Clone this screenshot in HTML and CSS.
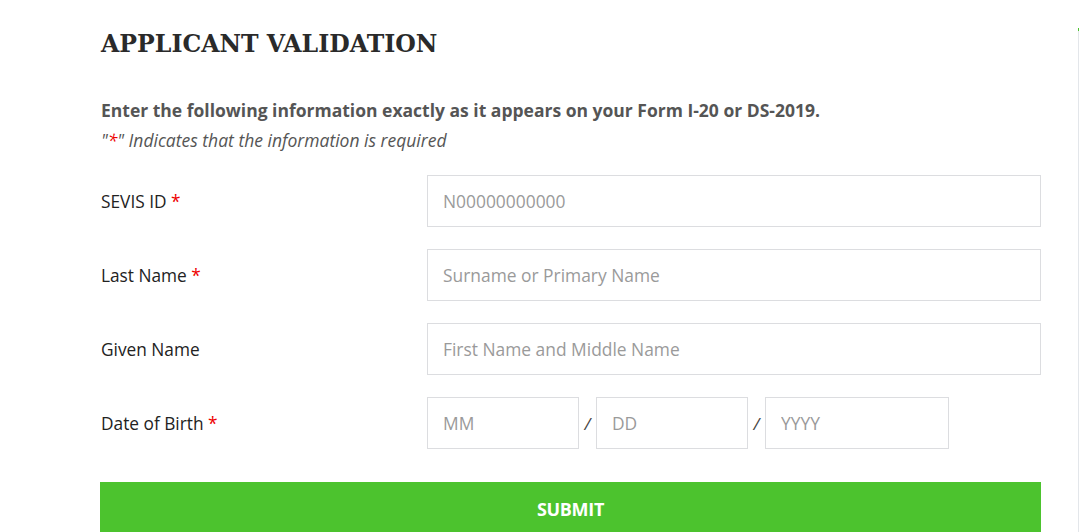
FILE: index.html
```html
<!DOCTYPE html>
<html lang="en">

<head>
    <meta charset="UTF-8">
    <title>Applicant Validation</title>
    <link rel="stylesheet" href="styles.css">
</head>

<body>
    <div class="page">
        <div class="main">
            <h1>APPLICANT VALIDATION</h1>

            <p class="intro">Enter the following information exactly as it appears on your Form I-20 or DS-2019.</p>
            <p class="note">"<span class="req">*</span>" Indicates that the information is required</p>

            <form class="frm">
                <div class="row">
                    <label for="sevis">SEVIS ID <span class="req">*</span></label>
                    <input id="sevis" type="text" placeholder="N00000000000">
                </div>
                <div class="row">
                    <label for="lastName">Last Name <span class="req">*</span></label>
                    <input id="lastName" type="text" placeholder="Surname or Primary Name">
                </div>
                <div class="row">
                    <label for="givenName">Given Name</label>
                    <input id="givenName" type="text" placeholder="First Name and Middle Name">
                </div>
                <div class="row">
                    <label for="mm">Date of Birth <span class="req">*</span></label>
                    <div class="dob">
                        <input id="mm" class="mm" type="text" placeholder="MM">
                        <span class="sep">/</span>
                        <input id="dd" class="dd" type="text" placeholder="DD">
                        <span class="sep">/</span>
                        <input id="yyyy" class="yyyy" type="text" placeholder="YYYY">
                    </div>
                </div>

                <button type="button" class="btn">SUBMIT</button>
            </form>
        </div>
        <div class="side"></div>
    </div>
</body>

</html>
```

FILE: styles.css
```css
body {
    margin: 0;
    font-family: "Open Sans", sans-serif;
    color: #222;
    background: #fff;
}

.page {
    display: flex;
    height: 532px;
    overflow: hidden;
}

.main {
    width: 941px;
    padding-left: 100px;
    flex: none;
}

.side {
    margin-left: 37px;
    margin-top: 28px;
    width: 1px;
    background: #e3e6ea;
    border-top: 3px solid #4cc32e;
}

h1 {
    font-family: "DejaVu Serif", serif;
    font-weight: bold;
    font-size: 23.6px;
    color: #2a2a2a;
    margin: 28px 0 0 1px;
    line-height: 32px;
}

.intro {
    font-weight: 700;
    font-size: 17.5px;
    color: #555;
    margin: 38px 0 0 1px;
    line-height: 24px;
}

.note {
    font-style: italic;
    font-size: 17.5px;
    color: #555;
    margin: 6px 0 0 1px;
    line-height: 24px;
}

.req {
    color: #e00;
}

.frm {
    margin-top: 23px;
}

.row {
    display: flex;
    align-items: center;
    height: 52px;
    margin-bottom: 22px;
}

.row label {
    width: 326px;
    flex: none;
    padding-left: 1px;
    font-size: 17.3px;
}

input {
    box-sizing: border-box;
    height: 52px;
    width: 614px;
    border: 1px solid #dcdde0;
    padding: 0 15px;
    font-family: "Open Sans", sans-serif;
    font-size: 17.4px;
    color: #222;
    outline: none;
}

input::placeholder {
    color: #9a9a9a;
}

.dob {
    display: flex;
    align-items: center;
}

.dob input.mm,
.dob input.dd {
    width: 152px;
}

.dob input.yyyy {
    width: 184px;
}

.sep {
    width: 17px;
    text-align: center;
    font-size: 17px;
    color: #444;
    font-style: italic;
}

.btn {
    display: block;
    width: 941px;
    height: 56px;
    margin-top: 33px;
    border: none;
    background: #4cc32e;
    color: #fff;
    font-family: "Open Sans", sans-serif;
    font-weight: 700;
    font-size: 18px;
    letter-spacing: -0.3px;
    padding-bottom: 4px;
}
```
